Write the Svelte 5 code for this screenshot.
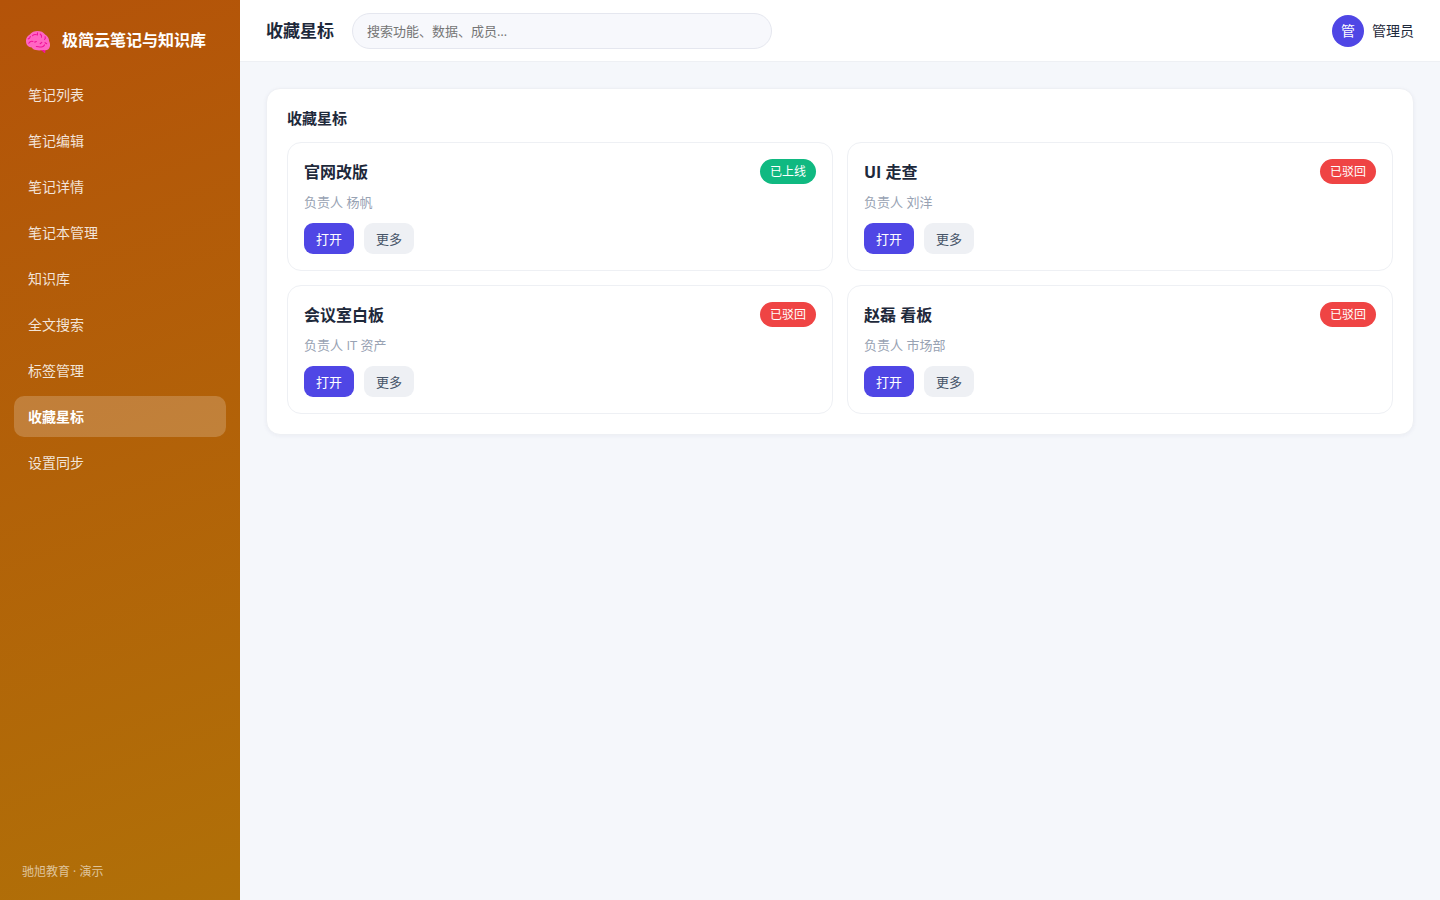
<script lang="ts">
  type Tone = "green" | "red";
  type Item = { title: string; owner: string; status: string; tone: Tone };

  const menu = ["笔记列表", "笔记编辑", "笔记详情", "笔记本管理", "知识库", "全文搜索", "标签管理", "收藏星标", "设置同步"];

  const items: Item[] = [
    { title: "官网改版", owner: "杨帆", status: "已上线", tone: "green" },
    { title: "UI 走查", owner: "刘洋", status: "已驳回", tone: "red" },
    { title: "会议室白板", owner: "IT 资产", status: "已驳回", tone: "red" },
    { title: "赵磊 看板", owner: "市场部", status: "已驳回", tone: "red" },
  ];

  let active = $state("收藏星标");
  let query = $state("");
</script>

<div class="app">
  <aside class="side">
    <div class="brand">
      <svg class="logo" viewBox="1 -1.5 22 23" aria-hidden="true">
        <path d="M14.500 17l.8 2.200 2.700 2.300.7-.3.100-4.200z" fill="#f0149a" />
        <path d="M1 11C.6 8 2.400 5.600 4.500 4.500 6 2 9 1.200 11.500 1.200c3 0 5.500 1 7 3.300 2.300 1.300 3.700 3.500 3.700 6 1.200 2.600 1.300 5-.2 7-1.300 1.400-3.500 1.600-5.500 1.300-2 .6-4.500.6-6.500 0-1.700-.2-3-.8-3.700-2.300C3.500 16.200 1 14.500 1 11z" fill="#ff66c4" />
        <path d="M3 8.500c1.200-.2 1.700-1 2-2.200M7 5.500c1-1 2.500-1.200 3.500-.8M11.500 3v2M14 4c1.500 1 1.500 2 1.200 3M18.500 6.500c.5 1 .2 2-.5 2.500M3.500 12.500c1-1.500 2.500-2 3.800-1.600M9 11.500l1.500-.5M10.500 15.500c2 0 3 1 5.500.3 1-.3 1.500-1 2-1.800M14 13l1.500-1.300M18.500 12l1.500 1" fill="none" stroke="#f0149a" stroke-width="1" stroke-linecap="round" />
      </svg>
      <span>极简云笔记与知识库</span>
    </div>
    <nav>
      {#each menu as name}
        <button class="item" class:on={name === active} onclick={() => (active = name)}>{name}</button>
      {/each}
    </nav>
    <div class="foot">驰旭教育 · 演示</div>
  </aside>

  <div class="main">
    <header class="top">
      <h1>{active}</h1>
      <input class="search" type="search" aria-label="搜索" placeholder="搜索功能、数据、成员…" bind:value={query} />
      <div class="user">
        <span class="avatar">管</span>
        <span>管理员</span>
      </div>
    </header>

    <main>
      <section class="panel">
        <h2>{active}</h2>
        <div class="grid">
          {#each items as item}
            <article class="card">
              <div class="row">
                <h3>{item.title}</h3>
                <span class="tag {item.tone}">{item.status}</span>
              </div>
              <p>负责人 {item.owner}</p>
              <div class="btns">
                <button class="btn primary">打开</button>
                <button class="btn">更多</button>
              </div>
            </article>
          {/each}
        </div>
      </section>
    </main>
  </div>
</div>

<style>
  :global(body) { margin: 0; background: #f5f7fb; }
  .app { display: flex; min-height: 100vh; font: 14px/20px "Open Sans", "Noto Sans CJK SC", sans-serif; color: #1e293b; }
  button, input { font: inherit; }
  h1, h2, h3, p { margin: 0; }

  .side { flex: 0 0 240px; box-sizing: border-box; display: flex; flex-direction: column; padding: 22px 14px 18px; background: linear-gradient(160deg, #b45309, #b07008); color: #fff; }
  .brand { display: flex; align-items: center; gap: 12px; height: 36px; padding: 0 12px; margin-bottom: 16px; font-size: 16px; font-weight: 700; white-space: nowrap; }
  .logo { width: 24px; height: 25px; flex: none; }
  nav { display: flex; flex-direction: column; gap: 5px; }
  .item { height: 41px; padding: 0 14px; border: 0; border-radius: 10px; background: none; color: rgba(255, 255, 255, .85); text-align: left; cursor: pointer; }
  .item.on { background: rgba(255, 255, 255, .2); color: #fff; font-weight: 700; }
  .foot { margin-top: auto; padding: 0 8px; font-size: 12px; color: rgba(255, 255, 255, .6); }

  .main { flex: 1; min-width: 0; }
  .top { display: flex; align-items: center; gap: 18px; box-sizing: border-box; height: 62px; padding: 0 26px; background: #fff; border-bottom: 1px solid #eef0f4; }
  h1 { font-size: 17px; font-weight: 700; white-space: nowrap; }
  .search { flex: 0 1 420px; min-width: 0; box-sizing: border-box; height: 36px; padding: 0 14px; border: 1px solid #e5e7ef; border-radius: 18px; background: #f7f8fc; color: inherit; font-size: 13px; appearance: none; }
  .search::placeholder { color: #757575; }
  .user { display: flex; align-items: center; gap: 8px; margin-left: auto; white-space: nowrap; }
  .avatar { display: grid; place-items: center; width: 32px; height: 32px; border-radius: 50%; background: #4f46e5; color: #fff; }

  main { padding: 26px; }
  .panel { padding: 20px; border: 1px solid #eef0f4; border-radius: 14px; background: #fff; box-shadow: 0 1px 4px rgba(30, 41, 90, .05); }
  h2 { margin-bottom: 14px; font-size: 15px; line-height: 19px; font-weight: 700; }
  .grid { display: grid; grid-template-columns: repeat(2, minmax(0, 1fr)); gap: 14px; }
  .card { padding: 16px; border: 1px solid #eef0f4; border-radius: 14px; }
  .row { display: flex; align-items: center; justify-content: space-between; gap: 10px; }
  h3 { font-size: 16px; font-weight: 700; }
  .tag { padding: 0 10px; border-radius: 13px; font-size: 12px; line-height: 25px; color: #fff; white-space: nowrap; }
  .tag.green { background: #10b981; }
  .tag.red { background: #ef4444; }
  .card p { margin: 8px 0 10px; font-size: 13px; line-height: 21px; color: #98a2b3; }
  .btns { display: flex; gap: 10px; }
  .btn { height: 31px; padding: 0 12px; border: 0; border-radius: 9px; background: #eef0f4; color: #475569; font-size: 13px; cursor: pointer; }
  .btn.primary { background: #4f46e5; color: #fff; }
</style>
